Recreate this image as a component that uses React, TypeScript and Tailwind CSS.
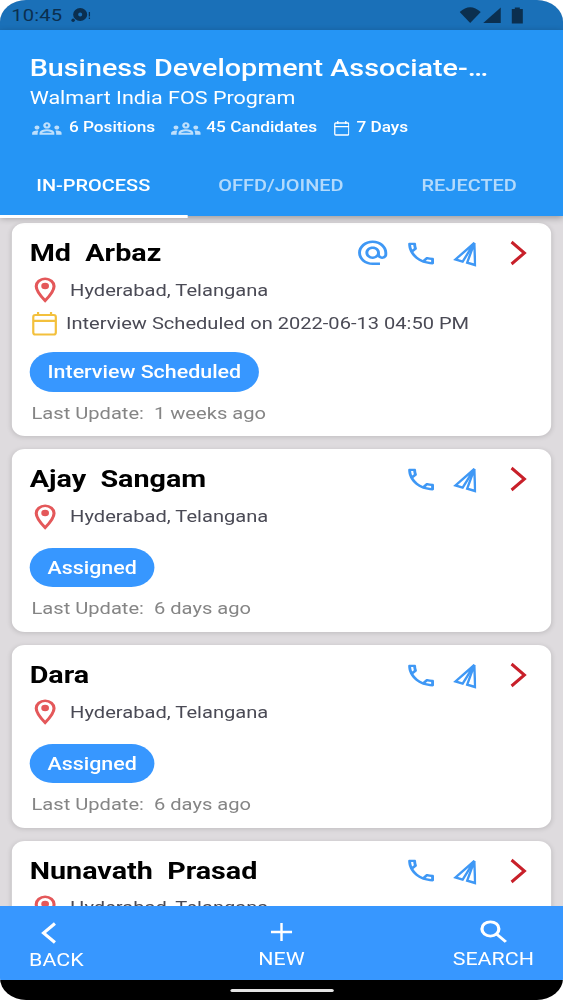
import { MdAlternateEmail, MdOutlineGroups, MdOutlinePhone } from "react-icons/md";

interface Candidate {
  name: string;
  location: string;
  interview?: string;
  status: string;
  updated: string;
  hasEmail?: boolean;
}

const candidates: Candidate[] = [
  {
    name: "Md  Arbaz",
    location: "Hyderabad, Telangana",
    interview: "Interview Scheduled on 2022-06-13 04:50 PM",
    status: "Interview Scheduled",
    updated: "1 weeks ago",
    hasEmail: true,
  },
  { name: "Ajay  Sangam", location: "Hyderabad, Telangana", status: "Assigned", updated: "6 days ago" },
  { name: "Dara", location: "Hyderabad, Telangana", status: "Assigned", updated: "6 days ago" },
  { name: "Nunavath  Prasad", location: "Hyderabad, Telangana", status: "Assigned", updated: "6 days ago" },
];

function SendIcon() {
  return (
    <svg viewBox="0 0 24 28" preserveAspectRatio="none" className="h-7 w-5" fill="none" stroke="#3f98f5" strokeWidth="2.4">
      <path d="M22 4 3 20.4l7.200 2.200z" />
      <path d="M22 4 14.800 23.600l8 2.400z" />
    </svg>
  );
}

function PinIcon() {
  return (
    <svg viewBox="0 0 24 24" className="-ml-0.5 size-[30px]" fill="none" stroke="#e4585a" strokeWidth="2.1">
      <path d="M12 3C8.700 3 6 5.700 6 9c0 4.200 4.600 9.800 6 11.500C13.400 18.800 18 13.200 18 9c0-3.300-2.700-6-6-6z" />
      <circle cx="12" cy="8.800" r="2.600" fill="#e4585a" stroke="none" />
    </svg>
  );
}

function SearchIcon() {
  return (
    <svg viewBox="0 0 24 24" className="ml-0.5 size-[30px]" fill="none" stroke="currentColor" strokeWidth="2.200">
      <circle cx="9.500" cy="9.500" r="5.700" />
      <path d="M13.500 13.500l6.400 6.400" />
    </svg>
  );
}

function CalendarIcon() {
  return (
    <svg viewBox="0 0 25 24" preserveAspectRatio="none" className="ml-[1.5px] h-6 w-[21px]" fill="none" stroke="#f3c03c" strokeWidth="2.200">
      <rect x="1.200" y="3" width="22.600" height="19.500" rx="2" />
      <path d="M1 8.800h23M6 0v4M19 0v4" />
    </svg>
  );
}

function SmallCalendarIcon() {
  return (
    <svg viewBox="0 0 16 15" preserveAspectRatio="none" className="ml-[13.5px] h-[15px] w-[13.5px]" fill="none" stroke="currentColor" strokeWidth="1.300">
      <rect x="1" y="2" width="14" height="12" rx="1" />
      <path d="M1 5.700h14M4 0v3M12 0v3" />
    </svg>
  );
}

function StatusBar() {
  return (
    <div className="flex h-[30px] shrink-0 items-center bg-[#1a70b8] pl-[9.5px] text-[#0b2f4f]">
      <span className="pt-0.5 text-[17px] tracking-[0.1px]">10:45</span>
      <svg viewBox="0 0 20 16" preserveAspectRatio="none" className="ml-[7px] h-4 w-[17px]" fill="currentColor">
        <path fillRule="evenodd" d="M10 1a7 6.500 0 1 1 0 13 7 6.500 0 0 1 0-13zm0 4.500a2 2 0 1 0 0 4 2 2 0 0 0 0-4z" />
        <circle cx="3" cy="13.300" r="1.700" />
        <path d="M18.500 5h1.300v4.500h-1.300zM18.500 10.500h1.300v1.500h-1.300z" />
      </svg>
      <svg viewBox="0 0 64 18" preserveAspectRatio="none" className="mr-[33px] ml-auto h-[18px] w-[54px]" fill="currentColor">
        <path d="M0 6Q10.500-3.500 21 6L10.500 17z" />
        <path d="M41 1.500v15.500H23.500z" />
        <path d="M52 3h3V1.500h5V3h3v14.500H52z" />
      </svg>
    </div>
  );
}

function Header() {
  return (
    <div className="relative z-10 h-[186px] shrink-0 bg-[#2595f5] text-white shadow-[0_2px_6px_rgba(0,0,0,0.3)]">
      <div className="px-[25px] pt-[22.5px]">
        <h1 className="text-[24.2px] leading-[30px] font-medium whitespace-nowrap">Business Development Associate-…</h1>
        <p className="text-[18.1px] leading-[30.5px] whitespace-nowrap">Walmart India FOS Program</p>
        <div className="flex h-[30px] items-center text-[14.5px] font-medium whitespace-nowrap">
          <MdOutlineGroups className="ml-0.5 size-[25px] text-white/70" />
          <span className="ml-1.5">6 Positions</span>
          <MdOutlineGroups className="ml-[13px] size-[25px] text-white/70" />
          <span className="ml-[5px]">45 Candidates</span>
          <SmallCalendarIcon />
          <span className="ml-[6px]">7 Days</span>
        </div>
      </div>
      <div className="mt-3 grid h-[60.5px] grid-cols-3 text-center text-[16.8px] leading-[60px] font-medium">
        <div className="border-b-[3px] border-white pr-px">IN-PROCESS</div>
        <div className="pr-px text-white/65">OFFD/JOINED</div>
        <div className="text-white/65">REJECTED</div>
      </div>
    </div>
  );
}

function CandidateCard({ candidate }: { candidate: Candidate }) {
  return (
    <div className="shrink-0 rounded-[11px] bg-white px-[15px] pb-[6.5px] shadow-[0_1px_5px_rgba(0,0,0,0.14)]">
      <div className="flex h-[52px] items-center pt-2">
        <h2 className="grow text-[24.2px] font-bold whitespace-pre text-black">{candidate.name}</h2>
        <div className="flex items-center text-[#3f98f5]">
          {candidate.hasEmail && <MdAlternateEmail className="mr-[11.5px] size-[29.5px]" />}
          <MdOutlinePhone className="mr-[12px] size-[29px]" />
          <SendIcon />
          <svg viewBox="0 0 18 26" preserveAspectRatio="none" className="mr-[5px] ml-[28px] h-[26px] w-[15px]" fill="none" stroke="#c8202a" strokeWidth="3">
            <path d="M2 2l13 11L2 24" />
          </svg>
        </div>
      </div>
      <div className="flex h-[31.5px] items-center pb-px text-[16.95px] text-[#4a4a55]">
        <PinIcon />
        <span className="ml-1.5">{candidate.location}</span>
      </div>
      {candidate.interview && (
        <div className="flex h-[30.5px] items-center pt-1 text-[16.9px] whitespace-nowrap text-[#4a4a55]">
          <CalendarIcon />
          <span className="ml-2">{candidate.interview}</span>
        </div>
      )}
      <div className="mt-[15px] flex">
        <span className="h-[39.5px] rounded-full bg-[#3797ff] px-[15px] text-[18.05px] leading-[39px] font-medium text-white">
          {candidate.status}
        </span>
      </div>
      <p className="mt-[5px] pl-[1.5px] text-[16.95px] leading-[33px] whitespace-pre text-[#858585]">{`Last Update:  ${candidate.updated}`}</p>
    </div>
  );
}

function BottomNav() {
  return (
    <div className="grid h-[74px] shrink-0 grid-cols-3 bg-[#3797ff] px-[24.5px] text-[18px] text-white">
      <button className="flex flex-col items-start pt-4">
        <svg viewBox="0 0 16 22" preserveAspectRatio="none" className="ml-[9px] h-[22px] w-[14px]" fill="none" stroke="currentColor" strokeWidth="3">
          <path d="M14 1.500 3 11l11 9.500" />
        </svg>
        <span className="leading-[31px]">BACK</span>
      </button>
      <button className="flex flex-col items-center pt-4">
        <svg viewBox="0 0 22 20" preserveAspectRatio="none" className="h-5 w-[18px]" fill="none" stroke="currentColor" strokeWidth="2.500">
          <path d="M11 1v18M0 10h22" />
        </svg>
        <span className="leading-[33px]">NEW</span>
      </button>
      <button className="flex flex-col items-center justify-self-end pt-[11px]">
        <SearchIcon />
        <span className="leading-6">SEARCH</span>
      </button>
    </div>
  );
}

export default function App() {
  return (
    <div className="h-[1000px] w-[563px] overflow-hidden bg-white font-[Roboto,sans-serif]">
      {/* 474px wide layout, stretched to the full width */}
      <div className="flex h-[1000px] w-[474px] origin-top-left scale-x-[1.1878] flex-col overflow-hidden rounded-[22px] bg-[#dedbde]">
        <StatusBar />
        <Header />
        <div className="flex min-h-0 flex-1 flex-col gap-[13.3px] overflow-hidden px-2.5 pt-[7px]">
          {candidates.map((candidate) => (
            <CandidateCard key={candidate.name} candidate={candidate} />
          ))}
        </div>
        <BottomNav />
        <div className="flex h-5 shrink-0 items-center justify-center bg-black pt-px">
          <div className="h-[3px] w-[87px] rounded-full bg-[#e4e4e4]" />
        </div>
      </div>
    </div>
  );
}
